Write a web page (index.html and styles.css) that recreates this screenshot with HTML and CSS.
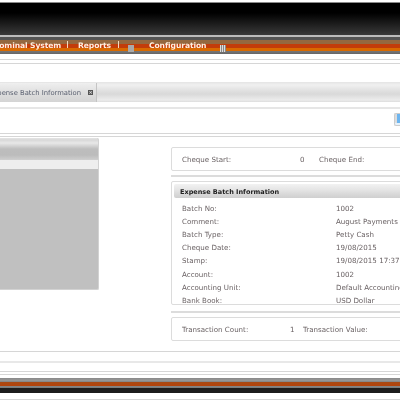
FILE: index.html
```html
<!DOCTYPE html>
<html lang="en">
<head>
<meta charset="utf-8">
<title>Expense Batch Information</title>
<link rel="stylesheet" href="styles.css">
</head>
<body>
<div class="page">
  <header class="masthead"></header>
  <nav class="nav">
    <div class="nav-items">
      <span class="nav-item first">Nominal System</span>
      <span class="tick"></span>
      <span class="nav-item reports">Reports</span>
      <span class="tick"></span>
      <span class="grip small"></span>
      <span class="nav-item config">Configuration</span>
      <span class="grip"></span>
    </div>
  </nav>
  <div class="rule rule-a"></div>
  <div class="rule rule-b"></div>
  <div class="tabbar">
    <div class="tab"><span class="tab-label">Expense Batch Information</span><span class="tab-close">×</span></div>
  </div>
  <div class="toolbar"><span class="tool-icon"></span></div>
  <div class="rule"></div>
  <div class="rule rule-c"></div>
  <main class="content">
    <aside class="side">
      <div class="side-head"></div>
      <div class="side-band"></div>
      <div class="side-body"></div>
    </aside>
    <section class="details">
      <div class="card pair">
        <span class="lbl w-start">Cheque Start:</span><span class="num n-zero">0</span><span class="lbl">Cheque End:</span>
      </div>
      <div class="divider"></div>
      <div class="card info">
        <h2 class="info-title">Expense Batch Information</h2>
        <dl class="rows">
          <dt>Batch No:</dt><dd>1002</dd>
          <dt>Comment:</dt><dd>August Payments</dd>
          <dt>Batch Type:</dt><dd>Petty Cash</dd>
          <dt>Cheque Date:</dt><dd>19/08/2015</dd>
          <dt>Stamp:</dt><dd>19/08/2015 17:37</dd>
          <dt>Account:</dt><dd>1002</dd>
          <dt>Accounting Unit:</dt><dd>Default Accounting</dd>
          <dt>Bank Book:</dt><dd>USD Dollar</dd>
        </dl>
      </div>
      <div class="divider low"></div>
      <div class="card pair">
        <span class="lbl w-count">Transaction Count:</span><span class="num n-one">1</span><span class="lbl">Transaction Value:</span>
      </div>
    </section>
  </main>
  <div class="rule"></div>
  <div class="rule rule-e"></div>
  <div class="rule rule-f"></div>
  <div class="rule rule-g"></div>
  <footer class="foot"></footer>
  <div class="rule rule-h"></div>
</div>
</body>
</html>
```
FILE: styles.css
```css
* { box-sizing: border-box; }
html, body { margin: 0; padding: 0; background: #fff; }
.page {
  width: 400px; height: 400px; overflow: hidden; background: #fff;
  font-family: "DejaVu Sans", Verdana, sans-serif; font-size: 7.1px; color: #6a6264;
  filter: blur(.3px);
}
.masthead {
  height: 38px; margin-top: 2px;
  border-top: 1px solid #8a8a8a;
  background: linear-gradient(#000 0, #000 10px, #3a3a3a 32px, #bdbdbd 32px, #bdbdbd 34px, #555 34px, #555 37px);
}
.nav {
  height: 14px;
  background: linear-gradient(#94683f 0, #94683f 4px, #c23c0a 4px, #c23c0a 8px, #d86a00 8px, #d86a00 11px, #777 11px, #666 14px);
}
.nav-items { display: flex; align-items: center; height: 11px; margin-left: -7px; white-space: nowrap; }
.nav-item { color: #fff0e0; font-weight: 700; font-size: 7.6px; letter-spacing: -.1px; flex: none; }
.first { width: 74px; }
.tick { width: 1px; height: 7px; background: #f3d9c0; margin-top: -3px; flex: none; }
.reports { margin-left: 10px; width: 40px; }
.grip { width: 6px; height: 7px; flex: none; margin-top: 6px; background: repeating-linear-gradient(90deg, #ddd 0 1px, #888 1px 2px); }
.grip.small { margin-left: 9px; background: #a9a9a9; }
.config { margin-left: 15px; width: 71px; }
.rule { height: 1px; background: #d6d6d6; }
.rule-a { margin-top: 5px; }
.rule-b { margin-top: 3px; }
.tabbar {
  margin-top: 18px; height: 20px; display: flex;
  background: linear-gradient(#e4e4e4, #f0f0f0 3px, #e2e2e2 8px, #d9d9d9 12px, #ececec 18px, #ddd);
}
.tab {
  width: 123px; margin-left: -26px; display: flex; align-items: center; flex: none; padding-left: 15px;
  height: 19px; margin-top: 1px;
  background: linear-gradient(#efefef, #dedede 10px, #d4d4d4);
  border-right: 1px solid #c4c4c4;
}
.tab-label { color: #5a6070; white-space: nowrap; font-size: 6.8px; width: 92px; flex: none; overflow: hidden; }
.tab-close { width: 5px; height: 5px; background: #555; color: #ddd; font-size: 5px; line-height: 5px; text-align: center; margin-left: 7px; flex: none; font-weight: 700; overflow: hidden; }
.toolbar { height: 26px; margin-top: 5px; border-top: 2px solid #e6e6e6; display: flex; justify-content: flex-end; padding-top: 4px; }
.tool-icon { width: 12px; height: 13px; border: 1px solid #ccc; border-right: 0; background: linear-gradient(90deg, #ddd 0 2px, #6db5ef 2px); border-radius: 2px 0 0 2px; box-shadow: inset 0 -2px 0 #e6f2fb; margin-right: -6px; }
.rule-c { margin-top: 2px; }
.content { display: flex; gap: 72px; height: 214px; }
.side { width: 99px; flex: none; height: 152px; margin-top: 1px; background: #c0c0c0; border-right: 1px solid #d2d2d2; border-bottom: 1px solid #d2d2d2; border-radius: 0 2px 2px 0; overflow: hidden; display: flex; flex-direction: column; }
.side-head { height: 22px; background: linear-gradient(#e4e4e4, #d8d8d8 2px, #e8e8e8 5px, #bdbdbd 11px, #bcbcbc 17px, #cfcfcf 22px); }
.side-band { height: 9px; background: #eeeeee; }
.side-body { flex: 1; }
.details { width: 260px; flex: none; padding-top: 10px; }
.card { border: 1px solid #dcdcdc; border-radius: 2px; background: #fff; }
.pair { height: 24px; display: flex; align-items: center; padding-left: 10px; }
.lbl { white-space: nowrap; flex: none; }
.w-start { width: 118px; }
.n-zero { width: 19px; }
.w-count { width: 108px; }
.n-one { width: 13px; }
.divider { height: 2px; background: #dcdcdc; margin: 4px 0; }
.divider.low { margin: 6px 0 4px; }
.info { height: 124px; overflow: hidden; padding: 2px; }
.info-title { margin: 0; height: 14px; line-height: 16px; font-size: 6.5px; font-weight: 700; color: #222; padding-left: 6px; border-radius: 2px; background: linear-gradient(#f2f2f2, #e4e4e4 6px, #cfcfcf 14px); }
.rows { margin: 4px 0 0; display: grid; grid-template-columns: 154px 1fr; grid-auto-rows: 13.1px; padding-left: 8px; align-items: center; }
.rows dt, .rows dd { margin: 0; white-space: nowrap; }
.rule-e { margin-top: 9px; height: 2px; background: #e8e8e8; }
.rule-f { margin-top: 8px; }
.rule-g { margin-top: 2px; }
.foot { margin-top: 3px; height: 15px; background: linear-gradient(#888 0, #999 3px, #777 4px, #a84a14 4px, #b5420a 8px, #888 8px, #777 10px, #1c1c1c 10px, #1c1c1c 15px); }
.rule-h { margin-top: 6px; }
```
